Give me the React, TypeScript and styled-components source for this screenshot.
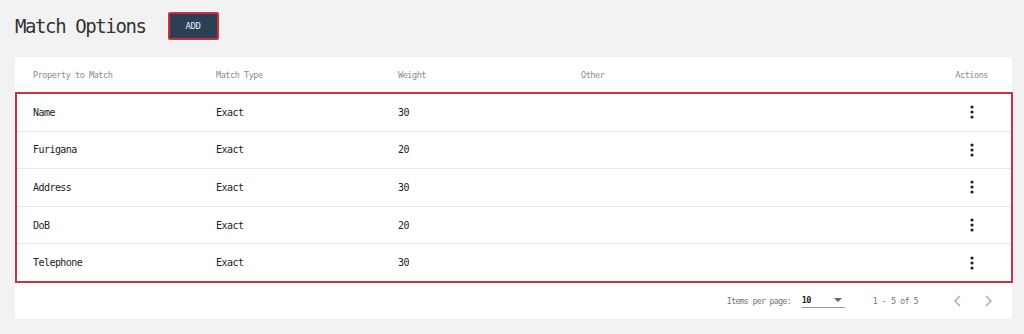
import { FC } from "react";
import styled, { createGlobalStyle } from "styled-components";

const GlobalStyle = createGlobalStyle`
	body {
		margin: 0;
		background-color: #f2f2f2;
		font-family: "DejaVu Sans Mono", "Liberation Mono", monospace;
		color: #222;
	}
`;

const Page = styled.div`
	padding: 0 12px 16px 15px;
`;

const TitleBar = styled.div`
	display: flex;
	align-items: center;
	height: 57px;
	gap: 22px;
`;

const Title = styled.h1`
	margin: 0;
	font-size: 19px;
	font-weight: normal;
	letter-spacing: -1.4px;
	color: #333;
	padding-bottom: 6px;
`;

const AddButton = styled.button`
	width: 51px;
	height: 28px;
	margin-bottom: 6px;
	background-color: #2b3f55;
	border: 2px solid #c8303f;
	border-radius: 2px;
	color: #e8edf2;
	font-family: inherit;
	font-size: 9px;
	letter-spacing: -0.4px;
	cursor: pointer;
`;

const Card = styled.div`
	background-color: #fff;
	width: 997px;
`;

const Row = styled.div<{ $head?: boolean }>`
	display: grid;
	grid-template-columns: 183px 182px 183px 1fr 80px;
	align-items: center;
	padding: 0 22px 0 16px;
	height: ${(p) => (p.$head ? "35px" : "36.6px")};
	font-size: ${(p) => (p.$head ? "8.5px" : "10px")};
	letter-spacing: ${(p) => (p.$head ? "-0.45px" : "-0.55px")};
	color: ${(p) => (p.$head ? "#8a8a8a" : "#222")};

	&:not(:last-child) {
		border-bottom: ${(p) => (p.$head ? "none" : "1px solid #e6e6e6")};
	}
`;

const Highlight = styled.div`
	border: 2px solid #c23644;
	margin-right: -1px;
`;

const Cell = styled.div<{ $right?: boolean }>`
	text-align: ${(p) => (p.$right ? "right" : "left")};
`;

const HeadRow = styled(Row)`
	padding-left: 18px;
	padding-right: 24px;
`;

const MenuButton = styled.span`
	display: flex;
	justify-content: flex-end;
	padding-right: 15px;
`;

const Footer = styled.div`
	display: flex;
	align-items: center;
	justify-content: flex-end;
	height: 36px;
	padding-right: 16px;
	font-size: 8.5px;
	letter-spacing: -0.6px;
	color: #777;
`;

const PageSize = styled.div`
	display: flex;
	align-items: center;
	gap: 11px;
`;

const PageSizeLabel = styled.span`
	letter-spacing: -0.85px;
`;

const Select = styled.div`
	display: flex;
	align-items: center;
	justify-content: space-between;
	width: 43px;
	height: 14px;
	padding-right: 2px;
	box-sizing: border-box;
	border-bottom: 1px solid #999;
	color: #222;
	font-weight: bold;
`;

const Range = styled.span`
	margin-left: 28px;
`;

const Nav = styled.div`
	display: flex;
	gap: 14px;
	margin-left: 32px;
`;

const rows = [
	{ property: "Name", type: "Exact", weight: 30 },
	{ property: "Furigana", type: "Exact", weight: 20 },
	{ property: "Address", type: "Exact", weight: 30 },
	{ property: "DoB", type: "Exact", weight: 20 },
	{ property: "Telephone", type: "Exact", weight: 30 },
];

const Dots: FC = () => (
	<svg width="4" height="14" viewBox="0 0 4 14">
		<circle cx="2" cy="2" r="1.6" fill="#222" />
		<circle cx="2" cy="7" r="1.6" fill="#222" />
		<circle cx="2" cy="12" r="1.6" fill="#222" />
	</svg>
);

const Chevron: FC<{ dir: "left" | "right" }> = ({ dir }) => (
	<svg width="16" height="16" viewBox="0 0 16 16">
		<path
			d={dir === "left" ? "M10 3 L5 8 L10 13" : "M6 3 L11 8 L6 13"}
			fill="none"
			stroke="#aaa"
			strokeWidth="1.4"
		/>
	</svg>
);

const App: FC = () => {
	return (
		<>
			<GlobalStyle />
			<Page>
				<TitleBar>
					<Title>Match Options</Title>
					<AddButton>ADD</AddButton>
				</TitleBar>
				<Card>
					<HeadRow $head>
						<Cell>Property to Match</Cell>
						<Cell>Match Type</Cell>
						<Cell>Weight</Cell>
						<Cell>Other</Cell>
						<Cell $right>Actions</Cell>
					</HeadRow>
					<Highlight>
						{rows.map((r) => (
							<Row key={r.property}>
								<Cell>{r.property}</Cell>
								<Cell>{r.type}</Cell>
								<Cell>{r.weight}</Cell>
								<Cell />
								<MenuButton>
									<Dots />
								</MenuButton>
							</Row>
						))}
					</Highlight>
					<Footer>
						<PageSize>
							<PageSizeLabel>Items per page:</PageSizeLabel>
							<Select>
								<span>10</span>
								<svg width="10" height="6" viewBox="0 0 10 6">
									<path d="M1 1 L9 1 L5 5 Z" fill="#666" />
								</svg>
							</Select>
						</PageSize>
						<Range>1 - 5 of 5</Range>
						<Nav>
							<Chevron dir="left" />
							<Chevron dir="right" />
						</Nav>
					</Footer>
				</Card>
			</Page>
		</>
	);
};

export default App;
